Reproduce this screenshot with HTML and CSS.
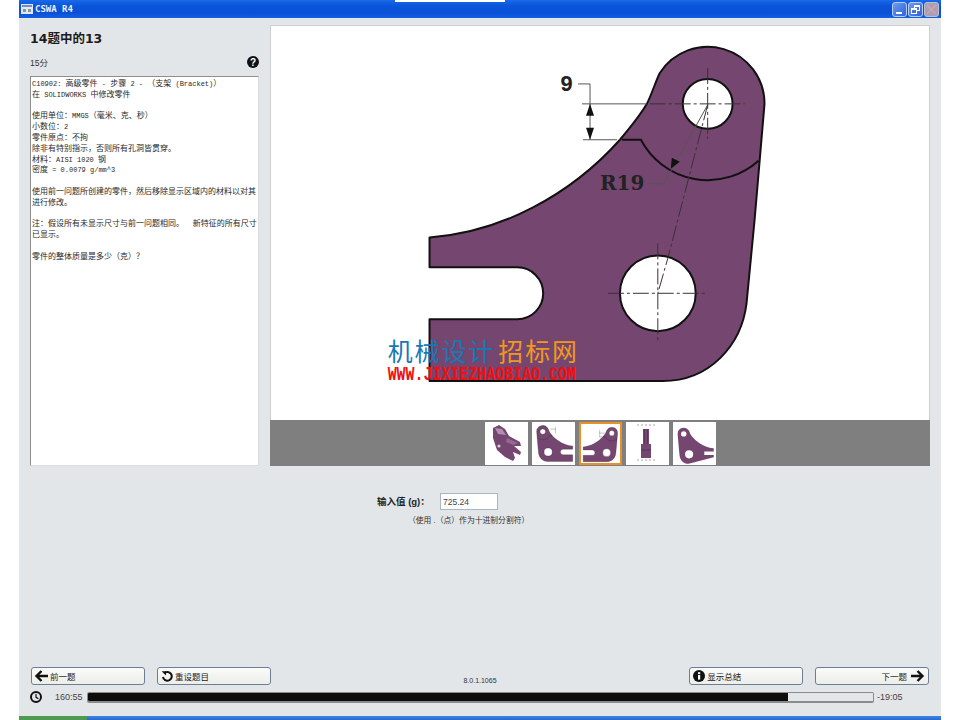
FILE: index.html
```html
<!DOCTYPE html>
<html lang="zh-CN">
<head>
<meta charset="utf-8">
<title>CSWA R4</title>
<link rel="stylesheet" href="styles.css">
</head>
<body>
<div class="topnotch"></div>
<div class="window">
  <header class="titlebar">
    <svg class="appicon" viewBox="0 0 12 10"><rect width="12" height="10" fill="#dfe8f5"/><rect x="1" y="1" width="10" height="2" fill="#6f8fc4"/><rect x="2" y="5" width="3" height="3" fill="#8b93a3"/><rect x="7" y="5" width="3" height="3" fill="#8b93a3"/></svg>
    <span class="apptitle">CSWA R4</span>
    <div class="winbtns">
      <span class="winbtn"><i class="glyph-min"></i></span>
      <span class="winbtn"><i class="glyph-max"></i><i class="glyph-max2"></i></span>
      <span class="winbtn winclose"><svg viewBox="0 0 10 10"><path d="M1 1 9 9M9 1 1 9" stroke="#c9a6ad" stroke-width="1.6"/></svg></span>
    </div>
  </header>

  <main class="main">
    <section class="side">
      <h1 class="qtitle">14题中的13</h1>
      <div class="scorerow">
        <span class="score">15分</span>
        <svg class="help" viewBox="0 0 12 12"><circle cx="6" cy="6" r="6" fill="#111"/><text x="6" y="9.6" class="helpq">?</text></svg>
      </div>
      <div class="qtext">
        <div class="ql"><span class="lat">C10902: </span>高级零件<span class="lat"> - </span>步骤<span class="lat"> 2 - </span>（支架<span class="lat"> (Bracket)</span>）</div>
        <div class="ql ql-end">在<span class="lat"> SOLIDWORKS </span>中修改零件</div>
        <div class="ql">使用单位：<span class="lat">MMGS</span>（毫米、克、秒）</div>
        <div class="ql">小数位：<span class="lat">2</span></div>
        <div class="ql">零件原点：不拘</div>
        <div class="ql">除非有特别指示，否则所有孔洞皆贯穿。</div>
        <div class="ql">材料：<span class="lat">AISI 1020 </span>钢</div>
        <div class="ql ql-end">密度<span class="lat"> = 0.0079 g/mm^3</span></div>
        <div class="ql">使用前一问题所创建的零件，然后移除显示区域内的材料以对其</div>
        <div class="ql ql-end">进行修改。</div>
        <div class="ql">注：假设所有未显示尺寸与前一问题相同。　 新特征的所有尺寸</div>
        <div class="ql ql-end">已显示。</div>
        <div class="ql">零件的整体质量是多少（克）？</div>
      </div>
    </section>

    <section class="viewer">
      <svg class="drawing" viewBox="270 25 660 395">
        <defs>
          <g id="part">
            <path class="body" fill-rule="evenodd" d="M429 237C500 232 570 195 620 139C631 126 640 115 647 103C652 93 656 80 660 72A57 57 0 0 1 765 103L755 220L747 303C742 345 710 381 663 381L429 381L429 319L517 319A26 26 0 0 0 517 267L429 267ZM733 103A25 25 0 1 0 683 103A25 25 0 1 0 733 103ZM696 293A38 38 0 1 0 620 293A38 38 0 1 0 696 293Z"/>
            <path class="edge" d="M622 139H641A76 76 0 0 0 759 160"/>
          </g>
        </defs>
        <use href="#part"/>
        <g class="thin">
          <path d="M582 103H647M583 139H617M578 83H590V139"/>
          <path d="M650 183H664L708 104"/>
        </g>
        <g class="center">
          <path d="M650 103H745M708 67V138"/>
          <path d="M608 293H706M658 243V342"/>
          <path d="M708 104L668 258L658 293"/>
        </g>
        <path class="arrow" d="M590 103L594 115H586ZM590 139L586 127H594ZM671 168L672 157L680 161Z"/>
        <text class="dim9" x="560" y="90">9</text>
        <text class="dimr" x="600" y="189">R19</text>
        <text class="mark markblue" x="387" y="361">机械设计</text>
        <text class="mark markorange" x="498" y="361">招标网</text>
        <text class="markurl" x="387" y="380" textLength="189" lengthAdjust="spacingAndGlyphs">WWW.JIXIEZHAOBIAO.COM</text>
      </svg>
      <div class="thumbs">
        <div class="thumb">
          <svg viewBox="0 0 43 43">
            <path class="body" d="M8 6L14 3L20 7L24 14L35 20L36 24L29 24L36 30L35 33L28 30L30 36L28 39L20 35L12 28L8 16Z"/>
            <path d="M10 6L17 7L21 13L13 12Z" fill="#b08fb0"/>
            <path d="M22 16L33 21L28 23L21 20Z" fill="#94688f"/>
            <circle cx="14" cy="24" r="1.6" fill="#d9c9d8"/>
          </svg>
        </div>
        <div class="thumb">
          <svg class="flip" viewBox="408 14 400 400"><use href="#part"/><path class="minithin" d="M640 80H590M590 60V120"/></svg>
        </div>
        <div class="thumb thumb-on">
          <svg viewBox="408 14 380 380"><use href="#part"/><path class="minithin" d="M582 103H640M583 139H617M590 70V139"/></svg>
        </div>
        <div class="thumb">
          <svg viewBox="0 0 43 43">
            <path class="body" d="M17 7H23V22H25V36H15V22H17Z"/>
            <path class="minidash" d="M11 3H31M11 38H31"/>
            <path d="M18.5 7V22M21.5 7V22M15 28H25" stroke="#4b2a48" stroke-width=".6"/>
          </svg>
        </div>
        <div class="thumb">
          <svg class="flip" viewBox="408 -8 400 400"><path class="body" fill-rule="evenodd" d="M429 237C500 232 570 195 620 139C631 126 640 115 647 103C652 93 656 80 660 72A57 57 0 0 1 765 103L755 220L747 303C742 345 710 381 663 381L429 320L429 300L517 300L517 267L429 267ZM733 103A25 25 0 1 0 683 103A25 25 0 1 0 733 103ZM696 293A38 38 0 1 0 620 293A38 38 0 1 0 696 293Z"/></svg>
        </div>
      </div>
    </section>
  </main>

  <section class="answer">
    <div class="answer-row">
      <label class="answer-label" for="val">输入值 (g)：</label>
      <input id="val" class="answer-input" type="text" value="725.24">
    </div>
    <p class="answer-hint">（使用 .（点）作为十进制分割符）</p>
  </section>

  <footer class="footer">
    <nav class="buttons">
      <button class="btn">
        <svg class="ico" viewBox="0 0 14 12"><path d="M14 6H3M7.5 1 2.5 6l5 5" fill="none" stroke="#111" stroke-width="2.4"/></svg>前一题
      </button>
      <button class="btn btn-second">
        <svg class="ico ico-round" viewBox="0 0 12 12"><path d="M3.2 3.2A4.4 4.4 0 1 1 2 7" fill="none" stroke="#111" stroke-width="2"/><path d="M0.6 1.2H5V5.6Z" fill="#111"/></svg>重设题目
      </button>
      <span class="version">8.0.1.1065</span>
      <button class="btn">
        <svg class="ico ico-round" viewBox="0 0 12 12"><circle cx="6" cy="6" r="6" fill="#111"/><rect x="5" y="5" width="2.2" height="4.6" fill="#fff"/><rect x="5" y="2.2" width="2.2" height="1.9" fill="#fff"/></svg>显示总结
      </button>
      <button class="btn btn-next">
        下一题<svg class="ico ico-next" viewBox="0 0 14 12"><path d="M0 6H11M6.5 1l5 5-5 5" fill="none" stroke="#111" stroke-width="2.4"/></svg>
      </button>
    </nav>
    <div class="timer">
      <svg class="clock" viewBox="0 0 12 12"><circle cx="6" cy="6" r="5" fill="none" stroke="#111" stroke-width="2"/><path d="M6 3V6.4L8.4 7.6" fill="none" stroke="#111" stroke-width="1.2"/></svg>
      <span class="elapsed">160:55</span>
      <div class="bar"><div class="bar-fill" style="width:89.2%"></div></div>
      <span class="remain">-19:05</span>
    </div>
  </footer>
  <div class="taskbar"><span class="startbtn"></span></div>
</div>
</body>
</html>
```

FILE: styles.css
```css
* { box-sizing: border-box; }
html, body { margin: 0; padding: 0; }
body {
  background: #fff;
  width: 960px;
  height: 720px;
  overflow: hidden;
  position: relative;
  font-family: "Liberation Sans", "Noto Sans CJK SC", sans-serif;
  color: #222;
}
.topnotch {
  position: absolute;
  left: 395px;
  top: 0;
  width: 110px;
  height: 2px;
  background: #fff;
  z-index: 2;
}
.window {
  margin-left: 19px;
  width: 922px;
  height: 720px;
  background: #e3e6e9;
  display: flex;
  flex-direction: column;
}
.titlebar {
  height: 18px;
  flex: none;
  display: flex;
  align-items: center;
  padding: 0 2px 0 2px;
  gap: 2px;
  background: linear-gradient(#1a6ae8 0, #0a56dc 30%, #0a50d4 70%, #1260e4 100%);
}
.appicon { width: 12px; height: 10px; }
.apptitle {
  font-family: "DejaVu Sans Mono", "Liberation Mono", monospace;
  font-weight: 700;
  font-size: 9px;
  color: #e8eefc;
}
.winbtns { margin-left: auto; display: flex; gap: 1px; }
.winbtn {
  width: 15px;
  height: 15px;
  border: 1px solid #b9cdf5;
  border-radius: 3px;
  background: linear-gradient(135deg, #6f9cf0, #2c62d6);
  position: relative;
  display: block;
}
.winbtn svg { display: block; width: 11px; height: 11px; margin: 1px; }
.winclose { background: #a9a0b8; border-color: #c3bccb; }
.glyph-min {
  position: absolute;
  left: 3px;
  bottom: 2px;
  width: 6px;
  height: 2px;
  background: #fff;
}
.glyph-max, .glyph-max2 {
  position: absolute;
  border: 1px solid #fff;
  border-top-width: 2px;
}
.glyph-max { left: 5px; top: 2px; width: 6px; height: 6px; }
.glyph-max2 { left: 2px; top: 5px; width: 6px; height: 6px; background: #3f72dc; }

.main {
  flex: none;
  height: 448px;
  padding: 7px 11px 0 11px;
  display: flex;
  gap: 11px;
}
.side { width: 229px; height: 441px; display: flex; flex-direction: column; }
.qtitle {
  margin: 0;
  height: 28px;
  padding-top: 6px;
  font-family: "DejaVu Sans", "Noto Sans CJK SC", sans-serif;
  font-size: 12.5px;
  line-height: 16px;
  font-weight: 700;
  color: #1c1c1c;
}
.scorerow {
  height: 23px;
  padding-bottom: 6px;
  display: flex;
  justify-content: space-between;
  align-items: center;
}
.score { font-size: 8.5px; color: #333; }
.help { width: 12px; height: 12px; }
.helpq { font-family: "Liberation Sans", sans-serif; font-weight: 700; font-size: 10px; fill: #fff; text-anchor: middle; }
.qtext {
  flex: 1;
  background: #fff;
  border: 1px solid #8e8e8e;
  border-right-color: #dcdcdc;
  border-bottom-color: #dcdcdc;
  padding: 2px 0 0 1px;
  font-family: "Liberation Mono", "Noto Sans CJK SC", monospace;
  font-size: 8px;
  color: #2a2a2a;
  overflow: hidden;
}
.ql { height: 10.8px; line-height: 10.8px; white-space: pre; }
.ql-end { margin-bottom: 10.8px; }
.lat { font-size: 7px; line-height: 1px; }
.viewer { width: 660px; height: 441px; display: flex; flex-direction: column; }
.drawing {
  display: block;
  width: 660px;
  height: 395px;
  background: #fff;
  border: 1px solid #cfcfcf;
  border-bottom: 0;
}
.body { fill: #75466f; stroke: #111; stroke-width: 2; stroke-linejoin: round; }
.edge { fill: none; stroke: #111; stroke-width: 2; }
.thin { fill: none; stroke: #555; stroke-width: 1; }
.center { fill: none; stroke: #3a3038; stroke-width: 1; stroke-dasharray: 16 3 3 3; }
.arrow { fill: #111; }
.dim9 { font-family: "Liberation Mono", monospace; font-weight: 700; font-size: 22px; fill: #222; }
.dimr { font-family: "DejaVu Serif", serif; font-weight: 700; font-size: 20px; fill: #222; }
.mark { font-family: "Noto Sans CJK SC", sans-serif; font-size: 25px; font-weight: 400; letter-spacing: 2px; }
.markblue { fill: #1878b4; }
.markorange { fill: #f0981e; }
.markurl { font-family: "Liberation Mono", monospace; font-size: 21px; font-weight: 700; fill: #f01010; }
.thumbs {
  height: 46px;
  background: #7f7f7f;
  display: flex;
  justify-content: center;
  align-items: flex-start;
  gap: 4px;
  padding-top: 2px;
}
.thumb { width: 43px; height: 43px; background: #fff; }
.thumb svg { display: block; width: 100%; height: 100%; }
.thumb-on { border: 2px solid #e8902a; }
.flip { transform: scaleX(-1); }
.minithin { fill: none; stroke: #777; stroke-width: 4; }
.minidash { fill: none; stroke: #888; stroke-width: .7; stroke-dasharray: 2 2; }
.thumb .body { stroke-width: 0; }

.answer { flex: none; height: 201px; padding-top: 27px; }
.answer-row { display: flex; align-items: center; height: 17px; padding-left: 358px; gap: 13px; }
.answer-label {
  width: 50px;
  padding-bottom: 2px;
  white-space: nowrap;
  font-size: 9.5px;
  font-weight: 700;
  color: #222;
}
.answer-input {
  width: 58px;
  height: 17px;
  padding: 0 0 0 2px;
  border: 1px solid #a9b4c4;
  background: #fff;
  font-family: "Liberation Sans", sans-serif;
  font-size: 8.5px;
  color: #444;
  outline: 0;
}
.answer-hint {
  margin: 5px 0 0 389px;
  font-size: 7.8px;
  line-height: 12px;
  color: #333;
  white-space: nowrap;
}
.footer { flex: none; height: 49px; padding-left: 12px; padding-right: 12px; }
.buttons { display: flex; align-items: flex-start; height: 23px; }
.btn {
  width: 114px;
  height: 18px;
  padding: 0 3px 0 2px;
  display: flex;
  align-items: center;
  gap: 2px;
  background: linear-gradient(#fbfbfa, #eceee9);
  border: 1px solid #6e7f94;
  border-radius: 3px;
  font-family: "Noto Sans CJK SC", sans-serif;
  font-size: 8.5px;
  color: #222;
}
.btn-second { margin-left: 12px; }
.btn-next { margin-left: 12px; justify-content: flex-end; }
.version {
  width: 419px;
  text-align: center;
  padding-top: 9px;
  font-size: 7px;
  line-height: 9px;
  color: #333;
}
.ico { width: 14px; height: 12px; flex: none; }
.ico-round { width: 12px; height: 12px; margin-left: 1px; }
.ico-next { margin-left: 2px; }
.timer { display: flex; align-items: center; height: 14px; }
.clock { width: 12px; height: 12px; margin-left: -1px; }
.elapsed { width: 32px; margin-left: 13px; font-size: 9px; color: #444; white-space: nowrap; }
.bar {
  width: 787px;
  height: 11px;
  background: #e3e6e8;
  border: 1px solid #8b8b8b;
  border-bottom-width: 2px;
  border-radius: 2px;
}
.bar-fill { height: 100%; background: #0c0c0c; border-radius: 1px 0 0 1px; }
.remain { margin-left: 3px; font-size: 9px; color: #444; white-space: nowrap; }
.taskbar {
  flex: none;
  height: 4px;
  margin-top: auto;
  background: linear-gradient(#3d86e6, #2866cc);
}
.startbtn { display: block; width: 68px; height: 4px; background: #4d9a50; }
```
